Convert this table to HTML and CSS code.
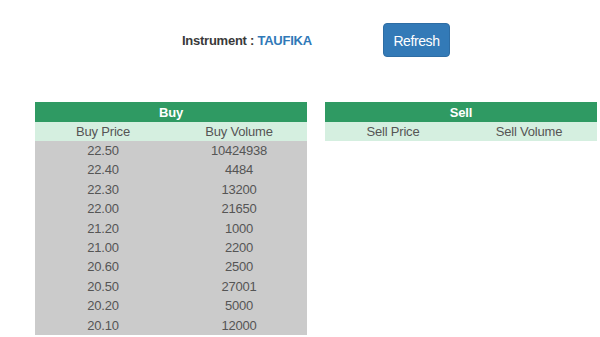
FILE: index.html
```html
<!DOCTYPE html>
<html>
<head>
<meta charset="utf-8">
<link rel="stylesheet" href="styles.css">
</head>
<body>
<div class="top">
  <div class="instrument">Instrument : <span class="name">TAUFIKA</span></div>
  <button class="btn">Refresh</button>
</div>
<div class="tables">
  <div class="book">
    <div class="head">Buy</div>
    <div class="sub"><span>Buy Price</span><span>Buy Volume</span></div>
    <div class="rows">
      <div class="row"><span>22.50</span><span>10424938</span></div>
      <div class="row"><span>22.40</span><span>4484</span></div>
      <div class="row"><span>22.30</span><span>13200</span></div>
      <div class="row"><span>22.00</span><span>21650</span></div>
      <div class="row"><span>21.20</span><span>1000</span></div>
      <div class="row"><span>21.00</span><span>2200</span></div>
      <div class="row"><span>20.60</span><span>2500</span></div>
      <div class="row"><span>20.50</span><span>27001</span></div>
      <div class="row"><span>20.20</span><span>5000</span></div>
      <div class="row"><span>20.10</span><span>12000</span></div>
    </div>
  </div>
  <div class="book">
    <div class="head">Sell</div>
    <div class="sub"><span>Sell Price</span><span>Sell Volume</span></div>
  </div>
</div>
</body>
</html>
```
FILE: styles.css
```css
html, body {
  margin: 0;
  padding: 0;
  background: #fff;
  font-family: "Liberation Sans", Arial, sans-serif;
}
.top {
  display: flex;
  align-items: center;
  padding: 23px 0 0 182px;
  height: 34px;
}
.instrument {
  font-size: 13px;
  letter-spacing: -0.25px;
  font-weight: bold;
  color: #3a3a3a;
  width: 201px;
  padding-top: 1px;
}
.name {
  color: #3079b8;
}
.btn {
  width: 67px;
  height: 34px;
  background: #337ab7;
  border: 1px solid #2e6da4;
  border-radius: 4px;
  color: #fff;
  font-family: "Liberation Sans", Arial, sans-serif;
  font-size: 14px;
  letter-spacing: -0.4px;
  padding: 1px 0 0;
}
.tables {
  display: flex;
  gap: 18px;
  padding: 45px 0 0 35px;
}
.book {
  width: 272px;
}
.head {
  background: #2f9a63;
  color: #fff;
  font-weight: bold;
  font-size: 13px;
  letter-spacing: -0.2px;
  text-align: center;
  box-sizing: border-box;
  height: 20px;
  line-height: 19px;
  padding-top: 1px;
}
.sub, .row {
  display: grid;
  grid-template-columns: 1fr 1fr;
  text-align: center;
  font-size: 13px;
  letter-spacing: -0.2px;
  color: #555;
  box-sizing: border-box;
}
.sub {
  background: #d5efe0;
  height: 19px;
  line-height: 18px;
  padding-top: 1px;
}
.rows {
  background: #cbcbcb;
}
.row {
  height: 19.4px;
  line-height: 18.4px;
  padding-top: 1px;
}
```
